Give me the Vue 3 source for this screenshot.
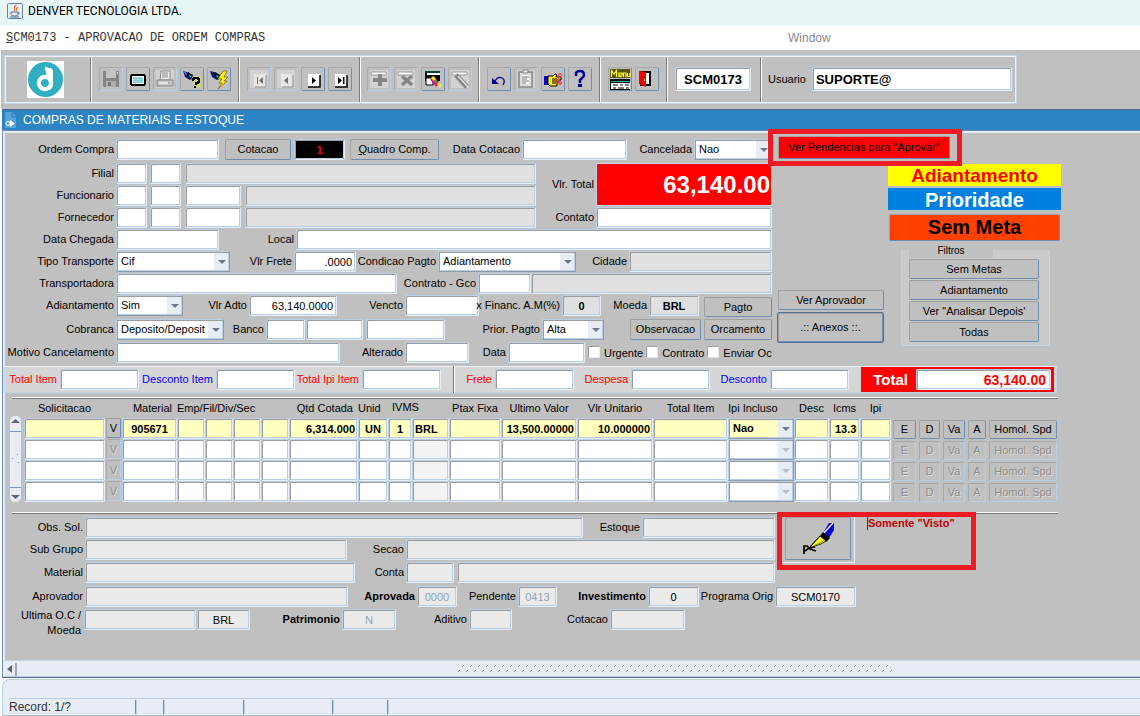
<script setup>
const items = [
  { on: true, mat: '905671', qtd: '6,314.000', unid: 'UN', iv: '1', moeda: 'BRL', ultimo: '13,500.00000', unit: '10.000000', ipi: 'Nao', icms: '13.3000' },
  { on: false },
  { on: false },
  { on: false },
]
const filtros = ['Sem Metas', 'Adiantamento', 'Ver "Analisar Depois\'', 'Todas']
const rowButtons = ['E', 'D', 'Va', 'A', 'Homol. Spd']
const statusCells = ['a', 'b', 'c', 'd', 'e']
</script>

<template>
  <div class="app">
    <header class="titlebar">
      <svg width="16" height="16" viewBox="0 0 16 16">
        <rect x=".5" y=".5" width="15" height="15" rx="1" fill="#e9eef2" stroke="#6f8190" />
        <path d="M9 2C5 5 10 5 7 8M11 4C8 6 11 6 9 8" fill="none" stroke="#e8742c" stroke-width="1.2" />
        <path d="M4 9h7v2.5q0 1.5-3.500 1.500T4 11.500zM11 9.500q2.500 0 0 2.300M3 14h9" fill="none" stroke="#4b7597" />
      </svg>
      <span>DENVER TECNOLOGIA LTDA.</span>
    </header>
    <nav class="menubar">
      <span class="menu-main"><u>S</u>CM0173 - APROVACAO DE ORDEM COMPRAS</span>
      <span class="menu-window">Window</span>
    </nav>

    <div class="toolbar-wrap">
      <div class="toolbar">
        <div class="group logo-group">
          <svg class="logo" width="37" height="37" viewBox="0 0 37 37">
            <rect width="37" height="37" fill="#fff" />
            <circle cx="18.500" cy="18.500" r="17.500" fill="#2fafc0" />
            <circle cx="18" cy="22" r="6" fill="none" stroke="#fff" stroke-width="4.500" />
            <path d="M18 7q6-1 8 2v14q0 5-4 6l-.5-7z" fill="#fff" />
            <path d="M18 7q5 1 6 6v6" fill="none" stroke="#fff" stroke-width="3" />
            <circle cx="18" cy="22" r="3.800" fill="#2fafc0" />
          </svg>
        </div>

        <div class="group">
          <button class="tool off" aria-label="Salvar"><svg viewBox="0 0 24 24"><path d="M4 4h16v16H5l-1-1z" fill="#858585" /><path d="M7 4h10v7H7z" fill="#c4c4c4" /><path d="M7 14h10v6H7z" fill="#b0b0b0" /><path d="M9 15h3v4H9z" fill="#777" /><path d="M18 5h1v2h-1z" fill="#ddd" /></svg></button>
          <button class="tool" aria-label="Tela"><svg viewBox="0 0 24 24"><path d="M5 7h14v1h1v10h-1v1H5v-1H4V8h1z" /><path d="M6 9h12v8H6z" fill="#fff" /><path d="M7 10h10v6H7z" fill="#7dcad2" /><path d="M8 10v6M10 10v6M12 10v6M14 10v6M16 10v6" stroke="#c5f0f3" stroke-width="1" stroke-dasharray="1 1" /></svg></button>
          <button class="tool off lit" aria-label="Imprimir"><svg viewBox="0 0 24 24"><path d="M8 4h9v9H7z" fill="#eee" stroke="#888" /><path d="M9 6h6M9 8h6M9 10h6" stroke="#888" /><path d="M4 13h16v6H4z" fill="#c9c9c9" stroke="#808080" /><path d="M6 16h9" stroke="#fff" /><path d="M15 16h2" stroke="#888" /></svg></button>
          <button class="tool" aria-label="Consultar"><svg viewBox="0 0 24 24"><path d="M3 4l4 1 5 4-2 4-5-3z" fill="#001878" /><path d="M8 5l5 3-2 5-4-5z" fill="#000" /><path d="M9 8l3 1-2 2z" fill="#22c8e0" /><path d="M3 5h2v1h1v2" stroke="#4c8cff" fill="none" /><path d="M13 9h8v11h-8z" fill="#e0d850" fill-opacity=".7" /><path d="M13 14v-2h1v-1h4v1h1v3h-1v1h-2v2M15 19v2" fill="none" stroke="#000" stroke-width="2" /></svg></button>
          <button class="tool" aria-label="Executar"><svg viewBox="0 0 24 24"><path d="M3 4l4 1 5 4-2 4-5-3z" fill="#001878" /><path d="M8 5l5 3-2 5-4-5z" fill="#000" /><path d="M9 8l3 1-2 2z" fill="#22c8e0" /><path d="M20 4l-4 0-5 8h4l-3 4h3l-4 6 9-8h-3l4-4h-4z" fill="#ffee10" stroke="#6b6200" stroke-width=".7" /></svg></button>
        </div>

        <div class="group">
          <button class="tool off lit" aria-label="Primeiro"><svg viewBox="0 0 24 24"><path d="M7 7h12v13H7z" fill="#e6e6e6" /><path d="M19 8v12H8" fill="none" stroke="#8a8a8a" /><path d="M10 10h1v7h-1zM16 10v7l-4-3.500z" fill="#707070" /></svg></button>
          <button class="tool off lit" aria-label="Anterior"><svg viewBox="0 0 24 24"><path d="M7 7h12v13H7z" fill="#e6e6e6" /><path d="M19 8v12H8" fill="none" stroke="#8a8a8a" /><path d="M14 10v7l-4-3.500z" fill="#707070" /></svg></button>
          <button class="tool" aria-label="Proximo"><svg viewBox="0 0 24 24"><path d="M7 7h12v13H7z" fill="#fff" /><path d="M19 8v12H7" fill="none" stroke="#000" stroke-width="1.500" /><path d="M11 10v7l4-3.500z" /></svg></button>
          <button class="tool" aria-label="Ultimo"><svg viewBox="0 0 24 24"><path d="M7 7h12v13H7z" fill="#fff" /><path d="M19 8v12H7" fill="none" stroke="#000" stroke-width="1.500" /><path d="M10 10v7l4-3.500zM15 10h1.500v7H15z" /></svg></button>
        </div>

        <div class="group tight">
          <button class="tool off lit" aria-label="Inserir"><svg viewBox="0 0 24 24"><path d="M4 5h15v3H4z" fill="#fff" stroke="#999" /><path d="M11 7h4v4h5v4h-5v4h-4v-4H6v-4h5z" fill="#868686" /></svg></button>
          <button class="tool off lit" aria-label="Remover"><svg viewBox="0 0 24 24"><path d="M4 5h15v3H4z" fill="#fff" stroke="#999" /><path d="M8 9l10 9M18 9L8 18" stroke="#868686" stroke-width="3.500" /></svg></button>
          <button class="tool" aria-label="Limpar"><svg viewBox="0 0 24 24"><path d="M4 4h15v10H4z" /><path d="M6 6h13v2H6z" fill="#fff" /><path d="M5 11h7v7H5z" fill="#fff" stroke="#000" /><path d="M4 5h15" stroke="#18807c" /><path d="M11 11l6 7" stroke="#e80f78" stroke-width="5" /><path d="M11 10l3 3" stroke="#ffea20" stroke-width="3" /><path d="M14 13l2 3" stroke="#19b93e" stroke-width="2" /><path d="M17 16l3 4" stroke="#f4e74a" stroke-width="3" /></svg></button>
          <button class="tool off lit" aria-label="Limpar registro"><svg viewBox="0 0 24 24"><path d="M4 5h15v3H4z" fill="#fff" stroke="#999" /><path d="M8 8l11 12" stroke="#858585" stroke-width="5" /><path d="M10 9l10 11" stroke="#e2e2e2" stroke-width="1.500" /></svg></button>
        </div>

        <div class="group">
          <button class="tool" aria-label="Desfazer"><svg viewBox="0 0 24 24"><path d="M8 14q3-5 7-3t1 7" fill="none" stroke="#000080" stroke-width="1.300" /><path d="M5 11v6h7z" fill="#000080" /></svg></button>
          <button class="tool off lit" aria-label="Colar"><svg viewBox="0 0 24 24"><path d="M5 5h13v15H5z" fill="#ddd" stroke="#858585" stroke-width="1.500" /><path d="M9 3h5v3H9z" fill="#eee" stroke="#858585" /><path d="M8 8h7v9H8z" fill="#fff" /><path d="M8 10h7M8 12h5M8 14h7M8 16h4" stroke="#777" /></svg></button>
          <button class="tool" aria-label="Editar"><svg viewBox="0 0 24 24"><path d="M3 9h4v9H3z" fill="#0000c0" /><path d="M7 9h5l2-2 2 1-1 2h5v3h-4v6H9l-2-2z" fill="#ffee20" stroke="#000" /><path d="M11 12h5M11 14h5M11 16h4" stroke="#000" /><path d="M15 12l5 5M15 15l5-6" stroke="#f33" /><circle cx="19" cy="8" r="1.500" fill="none" stroke="#f33" /><circle cx="19" cy="16" r="1.500" fill="none" stroke="#f33" /></svg></button>
          <button class="tool" aria-label="Ajuda"><svg viewBox="0 0 24 24"><path d="M8 9V6q1-2 4-2 4 0 4 4 0 2-2 3l-2 2v3" fill="none" stroke="#000094" stroke-width="2.500" /><path d="M10 17h4v3h-4z" fill="#000094" /></svg></button>
        </div>

        <div class="group">
          <button class="tool" aria-label="Menu"><svg viewBox="0 0 24 24"><path d="M2 2h20v9H2z" fill="#55520c" /><path d="M3.500 10V3.500L6 7l2.500-3.500V10M14 9.500h-3V6h3v2h-3M15.500 10V6H18v4M19.500 6v3.500H22V6" fill="none" stroke="#ffff20" stroke-width="1.200" /><path d="M2 12h20v11H2z" /><path d="M3 14h19v1H3z" fill="#1aa" /><path d="M3 16h19v6H3z" fill="#fff" /><path d="M5 18h5M12 18h3M17 18h4M5 21h3M10 21h6M18 21h3" stroke="#000" /></svg></button>
          <button class="tool" aria-label="Sair"><svg viewBox="0 0 24 24"><path d="M5 4h11v15H5z" /><path d="M11 6h3v11h-3z" fill="#fff" /><path d="M4 4l7 1v15l-7-3z" fill="#f00000" /><path d="M9 12h1v2H9z" fill="#ffe020" /></svg></button>
        </div>

        <div class="group prog-group"><input class="field prog" aria-label="Programa" value="SCM0173" /></div>
        <label class="group user-group"><span>Usuario</span><input class="field user" value="SUPORTE@" /></label>
      </div>
    </div>

    <div class="window-title">
      <svg width="12" height="16" viewBox="0 0 12 16"><path d="M0 0h7l4 4v12H0z" fill="#55a3d8" /><path d="M7 0v5h4" fill="none" stroke="#2c7fbe" /><path d="M5 8v7l5-3.500z" fill="#fff" /><circle cx="3" cy="11.500" r="2" fill="none" stroke="#fff" /></svg>
      <h1>COMPRAS DE MATERIAIS E ESTOQUE</h1>
    </div>

    <main class="panel">
      <div class="body">
        <section class="top">
          <div class="form">
            <div class="row r1">
              <label class="c"><span>Ordem Compra</span><input class="field" /></label>
              <button class="btn s6">Cotacao</button>
              <input class="field black s3" aria-label="Numero da cotacao" value="1" />
              <button class="btn s5"><span><u>Q</u>uadro Comp.</span></button>
              <label class="c"><span>Data Cotacao</span><input class="field" /></label>
              <label class="c"><span>Cancelada</span><span class="sel"><select><option>Nao</option></select></span></label>
            </div>
            <div class="split">
              <div>
                <div class="row r2">
                  <label class="c"><span>Filial</span><input class="field" /></label>
                  <input class="field s3" aria-label="Filial 2" />
                  <input class="field gray s4" aria-label="Nome da filial" readonly />
                </div>
                <div class="row r3">
                  <label class="c"><span>Funcionario</span><input class="field" /></label>
                  <input class="field s3" aria-label="Funcionario 2" />
                  <input class="field s4" aria-label="Funcionario 3" />
                  <input class="field gray s4" aria-label="Nome do funcionario" readonly />
                </div>
                <div class="row r3">
                  <label class="c"><span>Fornecedor</span><input class="field" /></label>
                  <input class="field s3" aria-label="Fornecedor 2" />
                  <input class="field s4" aria-label="Fornecedor 3" />
                  <input class="field gray s4" aria-label="Nome do fornecedor" readonly />
                </div>
              </div>
              <div class="values">
                <label class="c"><span>Vlr. Total</span><input class="field grand" value="63,140.00" /></label>
                <label class="c"><span>Contato</span><input class="field" /></label>
              </div>
            </div>
            <div class="row r5">
              <label class="c"><span>Data Chegada</span><input class="field" /></label>
              <label class="c"><span>Local</span><input class="field" /></label>
            </div>
            <div class="row r6">
              <label class="c"><span>Tipo Transporte</span><span class="sel"><select><option>Cif</option></select></span></label>
              <label class="c"><span>Vlr Frete</span><input class="field num" value=".0000" /></label>
              <label class="c"><span>Condicao Pagto</span><span class="sel"><select><option>Adiantamento</option></select></span></label>
              <label class="c"><span>Cidade</span><input class="field gray" readonly /></label>
            </div>
            <div class="row r7">
              <label class="c"><span>Transportadora</span><input class="field" /></label>
              <label class="c"><span>Contrato - Gco</span><input class="field" /></label>
              <input class="field gray" aria-label="Descricao do contrato" readonly />
            </div>
            <div class="row r8">
              <label class="c"><span>Adiantamento</span><span class="sel"><select><option>Sim</option></select></span></label>
              <label class="c"><span>Vlr Adto</span><input class="field num" value="63,140.0000" /></label>
              <label class="c"><span>Vencto</span><input class="field" /></label>
              <label class="c"><span>x Financ. A.M(%)</span><input class="field gray mid bold" value="0" readonly /></label>
              <label class="c"><span>Moeda</span><input class="field gray mid bold" value="BRL" readonly /></label>
              <button class="btn s5 low">Pagto</button>
            </div>
            <div class="row r9">
              <label class="c"><span>Cobranca</span><span class="sel"><select><option>Deposito/Deposit</option></select></span></label>
              <label class="c"><span>Banco</span><input class="field" /></label>
              <input class="field s1" aria-label="Agencia" />
              <input class="field s3" aria-label="Conta corrente" />
              <label class="c"><span>Prior. Pagto</span><span class="sel"><select><option>Alta</option></select></span></label>
              <button class="btn s26">Observacao</button>
              <button class="btn s3">Orcamento</button>
            </div>
            <div class="row r10">
              <label class="c"><span>Motivo Cancelamento</span><input class="field" /></label>
              <label class="c"><span>Alterado</span><input class="field" /></label>
              <label class="c"><span>Data</span><input class="field" /></label>
              <div class="checks">
                <label><input type="checkbox" />Urgente</label>
                <label><input type="checkbox" />Contrato</label>
                <label><input type="checkbox" />Enviar Oc</label>
              </div>
            </div>
          </div>

          <aside class="side">
            <div class="pend"><button class="btn pend-btn">Ver Pendencias para "Aprovar"</button></div>
            <div class="side-cols">
              <div class="side-a">
                <button class="btn">Ver Aprovador</button>
                <button class="btn anexos">.:: Anexos ::.</button>
              </div>
              <div class="side-b">
                <div class="banner yellow">Adiantamento</div>
                <div class="banner blue">Prioridade</div>
                <button class="btn meta">Sem Meta</button>
                <div class="filters">
                  <div class="legend">Filtros</div>
                  <button v-for="f in filtros" :key="f" class="btn">{{ f }}</button>
                </div>
              </div>
            </div>
          </aside>
        </section>

        <section class="totals">
          <label class="red w1"><span>Total Item</span><input class="field" /></label>
          <label class="navy w2"><span>Desconto Item</span><input class="field" /></label>
          <label class="red w3"><span>Total Ipi Item</span><input class="field" /></label>
          <i class="vsep"></i>
          <label class="red w4"><span>Frete</span><input class="field" /></label>
          <label class="red w5"><span>Despesa</span><input class="field" /></label>
          <label class="navy w6"><span>Desconto</span><input class="field" /></label>
          <label class="total"><span>Total</span><input class="field" value="63,140.00" /></label>
        </section>

        <div class="rule"></div>

        <section class="grid">
          <div class="vscroll">
            <svg width="11" height="10" viewBox="0 0 11 10"><path d="M1 7l4.500-4L10 7z" fill="#5c6478" /></svg>
            <svg class="thumb" width="11" height="57" viewBox="0 0 11 57"><path d="M2 27h1v1H2zM7 23h1v1H7zM8 31h1v1H8z" fill="#7a8aa5" /></svg>
            <svg width="11" height="10" viewBox="0 0 11 10"><path d="M1 3l4.500 4L10 3z" fill="#5c6478" /></svg>
          </div>
          <table>
            <colgroup>
              <col class="k81" /><col class="k17" /><col class="k55" /><col class="k28" /><col class="k28" /><col class="k28" /><col class="k28" />
              <col class="k69" /><col class="k30" /><col class="k24" /><col class="k37" /><col class="k52" /><col class="k76" /><col class="k76" />
              <col class="k75" /><col class="k66" /><col class="k35" /><col class="k31" /><col class="k31" /><col class="k26" /><col class="k24" />
              <col class="k25" /><col class="k21" /><col class="k71" />
            </colgroup>
            <thead>
              <tr>
                <th>Solicitacao</th><td></td><th class="e">Material</th><th colspan="4" class="b">Emp/Fil/Div/Sec</th><th class="e">Qtd Cotada</th>
                <th class="b">Unid</th><th colspan="2" class="ivms">IVMS</th><th>Ptax Fixa</th><th>Ultimo Valor</th><th>Vlr Unitario</th>
                <th>Total Item</th><th class="b">Ipi Incluso</th><th>Desc</th><th>Icms</th><th>Ipi</th><td colspan="5"></td>
              </tr>
            </thead>
            <tbody>
              <tr v-for="(r, i) in items" :key="i" :class="{ on: r.on }">
                <td><input class="field" aria-label="Solicitacao" /></td>
                <td><button class="btn v" :disabled="!r.on">V</button></td>
                <td><input class="field mid" aria-label="Material" :value="r.mat" /></td>
                <td><input class="field" aria-label="Emp" /></td>
                <td><input class="field" aria-label="Fil" /></td>
                <td><input class="field" aria-label="Div" /></td>
                <td><input class="field" aria-label="Sec" /></td>
                <td><input class="field num" aria-label="Qtd Cotada" :value="r.qtd" /></td>
                <td><input class="field mid" aria-label="Unid" :value="r.unid" /></td>
                <td><input class="field mid" aria-label="IVMS" :value="r.iv" /></td>
                <td><input class="field pale" aria-label="Moeda" :value="r.moeda" /></td>
                <td><input class="field" aria-label="Ptax Fixa" /></td>
                <td><input class="field num" aria-label="Ultimo Valor" :value="r.ultimo" /></td>
                <td><input class="field num" aria-label="Vlr Unitario" :value="r.unit" /></td>
                <td><input class="field" aria-label="Total Item" /></td>
                <td><span class="sel"><select aria-label="Ipi Incluso" :disabled="!r.on"><option>{{ r.ipi }}</option></select></span></td>
                <td><input class="field" aria-label="Desc" /></td>
                <td><input class="field icms" aria-label="Icms" :value="r.icms" /></td>
                <td><input class="field" aria-label="Ipi" /></td>
                <td v-for="b in rowButtons" :key="b" class="act"><button class="btn" :disabled="!r.on">{{ b }}</button></td>
              </tr>
            </tbody>
          </table>
        </section>

        <div class="rule second"></div>

        <section class="details">
          <div class="upper">
            <div class="upper-form">
              <div class="row d1">
                <label class="c"><span>Obs. Sol.</span><input class="field light" readonly /></label>
                <label class="c"><span>Estoque</span><input class="field light" readonly /></label>
              </div>
              <div class="row d2">
                <label class="c"><span>Sub Grupo</span><input class="field light" readonly /></label>
                <label class="c"><span>Secao</span><input class="field light" readonly /></label>
              </div>
              <div class="row d3">
                <label class="c"><span>Material</span><input class="field light" readonly /></label>
                <label class="c"><span>Conta</span><input class="field light" readonly /></label>
                <input class="field light s3" aria-label="Descricao da conta" readonly />
              </div>
            </div>
            <div class="visto">
              <div class="pen-box">
                <button class="btn" aria-label="Visto">
                  <svg width="34" height="34" viewBox="0 0 34 34">
                    <path d="M28 1h5v7l-5 8-6-5z" fill="#0000cc" /><path d="M32 1L21 13" stroke="#fff" stroke-width="1.300" />
                    <path d="M22 10l7 6-4 4-6-6z" /><path d="M19 14l6 5-5 3-12 4z" fill="#ffff30" stroke="#000" stroke-width=".8" /><path d="M24 18l-5 4-8 2z" fill="#9b9400" />
                    <path d="M19 14L8 26" stroke="#000" />
                    <path d="M3 32v-8h3l3 3 6 2M4 29l4-3 6-1" fill="none" stroke="#000" stroke-width="1.700" />
                  </svg>
                </button>
              </div>
              <span class="visto-text">Somente "Visto"</span>
            </div>
          </div>
          <div class="row d4">
            <label class="c"><span>Aprovador</span><input class="field light" readonly /></label>
            <label class="c"><span class="bold">Aprovada</span><input class="field light mid dim" value="0000" readonly /></label>
            <label class="c"><span>Pendente</span><input class="field light mid dim" value="0413" readonly /></label>
            <label class="c"><span class="bold">Investimento</span><input class="field light mid" value="0" readonly /></label>
            <label class="c"><span>Programa Orig</span><input class="field light mid" value="SCM0170" readonly /></label>
          </div>
          <div class="row d5">
            <label class="c"><span class="two">Ultima O.C /<br />Moeda</span><input class="field light" readonly /></label>
            <input class="field light mid s1" aria-label="Moeda" value="BRL" readonly />
            <label class="c"><span class="bold">Patrimonio</span><input class="field light mid dim" value="N" readonly /></label>
            <label class="c"><span>Aditivo</span><input class="field light" readonly /></label>
            <label class="c"><span>Cotacao</span><input class="field light" readonly /></label>
          </div>
        </section>
      </div>

      <div class="hscroll">
        <svg width="14" height="16" viewBox="0 0 14 16"><path d="M9 4v8L4 8z" fill="#5c6478" /><path d="M13 2v13" stroke="#5c6478" /></svg>
        <svg class="grip" height="8">
          <defs><pattern id="grip-dots" width="8" height="8" patternUnits="userSpaceOnUse">
            <path d="M4 1h1v1H4zM5 0h1v1H5zM0 6h1v1H0zM1 5h1v1H1z" fill="#7f98b8" /><path d="M5 1h1v1H5zM1 6h1v1H1z" fill="#fff" />
          </pattern></defs>
          <rect width="100%" height="8" fill="url(#grip-dots)" />
        </svg>
      </div>
    </main>

    <footer class="status">
      <div class="status-msg"></div>
      <div class="status-row">
        <span class="rec">Record: 1/?</span>
        <i v-for="c in statusCells" :key="c" :class="'st-' + c"></i>
      </div>
    </footer>
  </div>
</template>

<style>
body {
  background: #fff;
}
</style>

<style scoped>
*,
*::after {
  box-sizing: border-box;
}
.app {
  display: flex;
  flex-direction: column;
  min-height: 100vh;
  font: 11px/13px 'Liberation Sans', Arial, sans-serif;
  color: #000;
  background: #fff;
}
input, select, button {
  font: inherit;
  color: inherit;
  margin: 0;
  min-width: 0;
}
.titlebar {
  display: flex;
  align-items: center;
  gap: 5px;
  height: 26px;
  padding: 0 7px 4px;
  background: #e8f5f7;
  font: 12px/16px Roboto, 'Open Sans', sans-serif;
}
.menubar {
  display: flex;
  align-items: center;
  height: 24px;
  padding-left: 6px;
}
.menu-main {
  width: 782px;
  font: 12px/16px 'Liberation Mono', 'Courier New', monospace;
  color: #333;
}
.menu-window {
  font-size: 12px;
  color: #8b8b8b;
}
.toolbar-wrap {
  background: #c0c0c0;
  padding: 5px 3px;
  height: 59px;
  margin-left: 1px;
}
.toolbar {
  display: flex;
  width: 1013px;
  max-width: 100%;
  height: 49px;
  border: 1px solid #c5d5e8;
  box-shadow: inset 0 0 0 1px #eef3f9;
}
.group {
  display: flex;
  align-items: center;
  gap: 3px;
  padding: 0 7px;
  margin: 1px 0;
  border-left: 1px solid #fff;
  border-right: 1px solid #7d7d7d;
}
.tight {
  padding: 0 6px;
}
.group:last-child {
  border-right: 0;
}
.logo-group {
  padding: 0 26px 0 22px;
  border-left: 0;
}
.tool {
  flex: none;
  width: 24px;
  height: 24px;
  margin-bottom: 2px;
  padding: 0;
  border: 1px solid;
  border-color: #a6a6a6 #6d8db3 #6d8db3 #a6a6a6;
  border-radius: 2px;
  background: #c0c0c0;
}
.tool svg {
  display: block;
  width: 24px;
  height: 24px;
  margin: -1px;
}
.tool.off {
  border-color: #ababab #b8cfe5 #b8cfe5 #ababab;
}
.tool.lit {
  background: #d2d2d2;
  box-shadow: inset 0 0 0 2px #c0c0c0;
}
.prog-group {
  padding: 0 9px 0 7px;
}
.user-group {
  gap: 6px;
  padding: 0 4px 0 6px;
  flex: 1;
}

.window-title {
  display: flex;
  align-items: center;
  gap: 6px;
  height: 21px;
  margin-left: 2px;
  padding-left: 3px;
  background: #2c84c4;
  border-top: 1px solid #55688c;
  color: #fff;
}
.window-title h1 {
  margin: 0;
  font-size: 12px;
  font-weight: normal;
}
.panel {
  flex: 1;
  display: flex;
  flex-direction: column;
  margin-left: 2px;
  background: #c0c0c0;
  border-left: 1px solid #6d8db3;
  border-top: 1px solid #6d8db3;
  border-bottom: 1px solid #55688c;
  box-shadow: inset 2px 2px 0 #e4edf6;
}
.body {
  padding: 8px 0 0 1px;
}
.top {
  display: flex;
}
.form {
  flex: 0 1 768px;
}
.row {
  display: grid;
  height: 22px;
  align-items: start;
}
.c {
  display: contents;
}
.c > span:first-child {
  display: flex;
  justify-content: flex-end;
  align-items: center;
  height: 21px;
  padding-right: 2px;
  white-space: nowrap;
}
.field {
  display: block;
  width: 100%;
  height: 21px;
  padding: 0 3px;
  border: 1px solid;
  border-color: #b8cfe5 #e6eef7 #e6eef7 #b8cfe5;
  border-radius: 2px;
  box-shadow: inset 1px 1px 0 #9c9c9c, inset -1px -1px 0 #b8cfe5;
  background: #fff;
  outline: 0;
}
.toolbar .field {
  height: 24px;
  margin-bottom: 1px;
  font-size: 13px;
  font-weight: bold;
}
.toolbar .prog {
  width: 76px;
  text-align: center;
}
.toolbar .user {
  flex: 1;
}
.gray { background: #e0e0e0; }
.light { background: #eaeaea; }
.num { text-align: right; }
.mid { text-align: center; }
.bold { font-weight: bold; }
.dim { color: #8fa5bf; }
.black {
  background: #000;
  color: #f00;
  font-weight: bold;
  text-align: center;
}
.s1, .s3, .s4, .s5, .s6, .s26 { width: auto; }
.s1 { margin-left: 1px; }
.s3 { margin-left: 3px; }
.s4 { margin-left: 4px; }
.s5 { margin-left: 5px; }
.s6 { margin-left: 6px; }
.s26 { margin-left: 26px; }
.sel {
  position: relative;
  display: block;
}
.sel select {
  display: block;
  appearance: none;
  width: 100%;
  height: 21px;
  padding: 0 18px 0 4px;
  border: 1px solid;
  border-color: #b8cfe5 #8f9bab #8f9bab #b8cfe5;
  box-shadow: inset 1px 1px 0 #9c9c9c, inset -1px -1px 0 #b8cfe5;
  background: linear-gradient(to left, #e8edf5 15px, transparent 15px) #fff;
  opacity: 1;
}
.sel::after {
  content: '';
  position: absolute;
  right: 4px;
  top: 9px;
  border: 4px solid transparent;
  border-top-color: #6b7590;
  border-bottom: 0;
  pointer-events: none;
}
.btn {
  display: flex;
  align-items: center;
  justify-content: center;
  height: 21px;
  padding: 0;
  border: 1px solid;
  border-color: #a0a0a0 #6d8db3 #6d8db3 #a0a0a0;
  border-radius: 2px;
  background: #c0c0c0;
  white-space: nowrap;
}
.btn:disabled {
  color: #8e8e8e;
  border-color: #a8a8a8 #b8cfe5 #b8cfe5 #a8a8a8;
  text-shadow: 1px 1px 0 #dcdcdc;
}
.low { margin-top: 2px; height: 20px; }
.r1 { height: 24px; grid-template-columns: 112px 103px 72px 54px 94px 83px 105px 67px 1fr; }
.r2 { grid-template-columns: 112px 31px 34px 1fr; }
.r3 { grid-template-columns: 112px 31px 34px 60px 1fr; }
.split { display: grid; grid-template-columns: 1fr 236px; }
.values {
  display: grid;
  grid-template-columns: 60px 1fr;
  grid-template-rows: 44px 22px;
}
.values .c:first-child > span { height: 43px; }
.grand {
  height: 43px;
  padding: 0 1px;
  border-color: #c5d5e8;
  box-shadow: none;
  background: #f00;
  color: #fff;
  font-size: 24px;
  font-weight: bold;
  text-align: right;
}
.r5 { grid-template-columns: 112px 103px 77px 1fr; }
.r6 { grid-template-columns: 112px 114px 64px 62px 82px 138px 53px 1fr; }
.r7 { grid-template-columns: 112px 281px 81px 53px 1fr; }
.r8 { height: 24px; grid-template-columns: 112px 67px 66px 88px 68px 74px 83px 39px 48px 50px 1fr; }
.r9 { height: 23px; grid-template-columns: 112px 108px 42px 39px 58px 82px 97px 62px 97px 1fr; }
.r10 { height: 24px; grid-template-columns: 112px 224px 65px 64px 39px 77px 1fr; }
.checks {
  display: flex;
  gap: 3px;
  padding-left: 3px;
}
.checks label {
  display: flex;
  align-items: center;
  gap: 4px;
  height: 23px;
  white-space: nowrap;
}
.checks input {
  appearance: none;
  flex: none;
  width: 12px;
  height: 12px;
  margin-bottom: 4px;
  background: #fff;
  border: 1px solid #a0a0a0;
  border-right-color: #dfe8f2;
  border-bottom-color: #dfe8f2;
}

.side {
  flex: 0 1 288px;
  margin-left: 1px;
}
.pend {
  position: relative;
  height: 28px;
  margin-top: -3px;
  padding-left: 5px;
}
.pend::after {
  content: '';
  position: absolute;
  left: -5px;
  top: -7px;
  width: 194px;
  height: 37px;
  border: 5px solid #ed1c24;
  pointer-events: none;
}
.pend-btn {
  width: 172px;
  height: 23px;
  background: #f00;
}
.side-cols {
  display: flex;
  gap: 4px;
  padding-left: 4px;
}
.side-a {
  flex: 0 0 107px;
  display: flex;
  flex-direction: column;
  gap: 2px;
  padding-top: 126px;
}
.side-a .btn { height: 20px; margin-left: 1px; }
.side-a .anexos {
  height: 31px;
  margin-left: 0;
  border: 1px solid #55709a;
  box-shadow: inset 1px 1px 0 #a0a0a0, inset -1px -1px 0 #6d8db3;
}
.side-b { flex: 1; }
.banner {
  height: 22px;
  margin-bottom: 2px;
  font: bold 19px/24px 'Liberation Sans', Arial, sans-serif;
  text-align: center;
}
.yellow { background: #ff0; color: #f00; }
.blue { background: #0080e0; color: #fff; font-size: 20px; }
.meta {
  width: calc(100% - 2px);
  height: 27px;
  margin: 4px 1px 0;
  background: #ff4000;
  font-size: 20px;
  font-weight: bold;
}
.filters {
  display: flex;
  flex-direction: column;
  gap: 1px;
  margin: 9px 11px 0 13px;
  padding: 0 10px 3px 7px;
  height: 96px;
  border: 1px solid #c5d5e8;
  border-top: 0;
  background: #cacaca;
}
.legend {
  width: 84px;
  height: 8px;
  background: #c0c0c0;
  font-size: 10px;
  line-height: 1px;
  text-align: center;
}
.filters .btn { height: 20px; }

.totals {
  display: flex;
  align-items: center;
  width: 1053px;
  max-width: 100%;
  height: 27px;
  border: 1px solid #c5d5e8;
  border-top-color: #eef3f9;
  background: #d6d6d6;
}
.totals label {
  display: flex;
  align-items: center;
  justify-content: flex-end;
  gap: 3px;
  white-space: nowrap;
}
.totals .field { flex: none; width: 79px; }
.red { color: #f00; }
.navy { color: #00f; }
.w1 { width: 134px; }
.w2 { width: 156px; }
.w3 { width: 146px; }
.w4 { width: 119px; }
.w5 { width: 136px; }
.w6 { width: 139px; }
.vsep {
  height: 27px;
  margin-left: 12px;
  border-left: 1px solid #777;
  border-right: 1px solid #fff;
}
.totals .total {
  flex: 1;
  height: 25px;
  margin: 0 2px 0 12px;
  padding-right: 3px;
  gap: 8px;
  background: #f00;
  color: #fff;
  font-size: 15px;
  font-weight: bold;
}
.totals .total .field {
  width: 135px;
  padding-right: 4px;
  color: #f00;
  font-size: 14px;
  text-align: right;
}
.rule {
  width: 1046px;
  max-width: 100%;
  margin: 4px 0 0 8px;
  height: 2px;
  background: #777;
  border-top: 1px solid #fff;
}
.grid {
  display: flex;
  align-items: flex-end;
  gap: 3px;
  padding-left: 6px;
}
.vscroll {
  flex: none;
  display: flex;
  flex-direction: column;
  justify-content: space-between;
  width: 11px;
  height: 86px;
  border-radius: 5px;
  background: #e8edf5;
}
.thumb {
  border-top: 1px solid #7a96b8;
  border-bottom: 1px solid #7a96b8;
}
table {
  table-layout: fixed;
  width: 1034px;
  border-collapse: collapse;
}
th, td { padding: 0; }
th {
  height: 19px;
  font-weight: normal;
  white-space: nowrap;
}
.b { text-align: left; }
.e { text-align: right; padding-right: 5px; }
.ivms { text-align: left; padding: 0 0 2px 4px; }
tbody tr { height: 21px; }
td { vertical-align: top; }
td .field { padding: 0 2px; font-weight: bold; }
td .icms { padding: 0 2px 0 5px; }
td .sel select { font-weight: bold; }
td .btn { width: 100%; height: 20px; }
td .v { width: 15px; margin-left: 1px; }
.act { padding: 2px 1px 0 2px; }
.act .btn { height: 19px; }
.pale { background: #f3f3f3; }
.on .field { background: #ffffbf; }
.on .sel select { background: linear-gradient(to left, #e8edf5 15px, transparent 15px) #ffffbf; }
tr:not(.on) .sel::after { border-top-color: #b9bdc6; }
.k81 { width: 81px; }
.k17 { width: 17px; }
.k55 { width: 55px; }
.k28 { width: 28px; }
.k69 { width: 69px; }
.k30 { width: 30px; }
.k24 { width: 24px; }
.k37 { width: 37px; }
.k52 { width: 52px; }
.k76 { width: 76px; }
.k75 { width: 75px; }
.k66 { width: 66px; }
.k35 { width: 35px; }
.k31 { width: 31px; }
.k26 { width: 26px; }
.k25 { width: 25px; }
.k21 { width: 21px; }
.k71 { width: 71px; }

.second { margin-top: 10px; }
.details { padding-top: 3px; }
.upper { display: flex; gap: 6px; }
.upper-form { flex: 0 1 771px; }
.d1 { grid-template-columns: 81px 498px 59px 1fr; }
.d2 { height: 23px; grid-template-columns: 81px 262px 59px 1fr; }
.d3 { height: 24px; grid-template-columns: 81px 270px 51px 48px 1fr; }
.d4 { height: 23px; grid-template-columns: 81px 263px 69px 40px 61px 39px 91px 51px 76px 81px; }
.d5 { grid-template-columns: 80px 112px 54px 92px 54px 73px 43px 98px 75px; }
.c > .two:first-child {
  height: 30px;
  margin-top: -1px;
  padding-right: 3px;
  line-height: 15px;
  text-align: right;
}
.visto {
  position: relative;
  display: flex;
  align-items: flex-start;
  gap: 12px;
  width: 200px;
}
.visto::after {
  content: '';
  position: absolute;
  left: -4px;
  top: -5px;
  width: 199px;
  height: 58px;
  border: 5px solid #ed1c24;
  pointer-events: none;
}
.pen-box {
  padding: 0 3px 2px 4px;
  border-right: 1px solid #eef3f9;
  border-bottom: 1px solid #eef3f9;
}
.pen-box .btn { width: 66px; height: 43px; }
.visto-text {
  border-left: 1px solid #c00000;
  color: #c00000;
  font-weight: bold;
}

.hscroll {
  display: flex;
  align-items: center;
  height: 17px;
  margin-top: auto;
  background: #e8edf5;
  border-top: 1px solid #c5d5e8;
  border-bottom: 1px solid #b8cfe5;
}
.grip {
  width: 436px;
  margin-left: 441px;
}
.status {
  height: 37px;
  margin: 1px 0 0 2px;
  border-top: 1px solid #b8cfe5;
  border-left: 1px solid #b8cfe5;
  border-bottom: 1px solid #a9c0c0;
  border-top-left-radius: 8px;
  background: #e8edf5;
  color: #333;
}
.status-msg {
  height: 19px;
  margin-left: 6px;
  border-bottom: 1px solid #b8cfe5;
}
.status-row {
  display: flex;
  align-items: center;
  height: 16px;
  padding-left: 6px;
  font-size: 12px;
}
.rec { width: 126px; margin-right: -27px; }
.status-row i {
  height: 14px;
  border-right: 1px solid #6d8db3;
  box-shadow: 1px 0 0 #b8cfe5;
}
.st-a, .st-b { width: 28px; }
.st-c { width: 80px; }
.st-d { width: 89px; }
.st-e { width: 55px; }
</style>
